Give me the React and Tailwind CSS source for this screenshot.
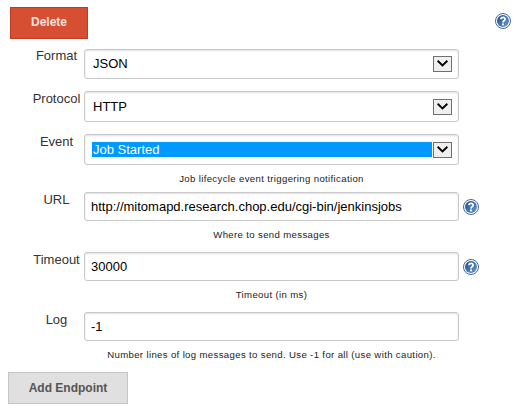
import React from 'react';

function HelpIcon() {
  return (
    <svg width="16" height="16" viewBox="0 0 16 16" className="block shrink-0">
      <defs>
        <linearGradient id="help" x1="0" y1="0" x2="1" y2="1">
          <stop offset="0" stopColor="#17498c" />
          <stop offset="1" stopColor="#6f9fce" />
        </linearGradient>
      </defs>
      <circle cx="8" cy="8" r="7.5" fill="#fff" stroke="#3f6a9f" strokeWidth="1" />
      <circle cx="8" cy="8" r="6" fill="url(#help)" />
      <path d="M6 6.2C6 3.7 10.1 3.7 10.1 6C10.1 7.6 8 7.6 8 9.5" fill="none" stroke="#fff" strokeWidth="1.8" />
      <rect x="7" y="10.5" width="2" height="1.8" fill="#fff" />
    </svg>
  );
}

function Arrow() {
  return (
    <span className="flex h-4 w-[19px] shrink-0 items-center justify-center border border-[#707070] bg-[#efefef]">
      <svg width="11" height="7" viewBox="0 0 11 7" className="mb-px block">
        <path d="M0.6 0.8L5.5 5.5L10.4 0.8" fill="none" stroke="#000" strokeWidth="1.9" />
      </svg>
    </span>
  );
}

const box = 'flex w-[375px] shrink-0 items-center rounded-[3px] border border-[#c8c8c8] bg-white shadow-[inset_0_1px_2px_rgba(0,0,0,0.12)]';

function Row({ label, height, help, hint, labelTop = 'mt-px', children }) {
  return (
    <div className={`flex items-start ${height}`}>
      <div className={`ml-[29px] w-[55px] shrink-0 text-center text-[13px] leading-[14px] whitespace-nowrap text-[#333] ${labelTop}`}>{label}</div>
      <div className="w-[375px] shrink-0">
        {children}
        {hint && <div className="mt-2 text-center text-[9.6px] leading-3 tracking-[0.35px] whitespace-nowrap text-[#222]">{hint}</div>}
      </div>
      {help && <div className="ml-1 mt-[7px]"><HelpIcon /></div>}
    </div>
  );
}

function Select({ value, height, selected, nudge = '' }) {
  return (
    <div className={`${box} ${height} pl-[7px] pr-[6px] ${nudge}`}>
      <span className={`mr-px flex h-[15px] flex-1 items-center pl-px text-[13px] leading-[15px] ${selected ? 'bg-[#0099ff] text-white' : 'text-black'}`}>{value}</span>
      <Arrow />
    </div>
  );
}

function Input({ value }) {
  return (
    <div className={`${box} h-[29px] pl-[6px] text-[13px] leading-[15px] text-black`}>
      <span>{value}</span>
    </div>
  );
}

export default function App() {
  return (
    <div className="h-[414px] w-[518px] overflow-hidden bg-white font-['Liberation_Sans',Arial,sans-serif]">
      <div className="flex h-[49px] items-start justify-between pl-[10px] pr-[7px] pt-[7px]">
        <button className="h-8 w-[78px] border border-[#c03c20] bg-[#d64f33] pb-[2px] text-[12px] font-bold leading-[14px] text-[#f7e3df]">Delete</button>
        <div className="mt-[6px]"><HelpIcon /></div>
      </div>
      <Row label="Format" height="h-[42px]" labelTop="mt-0"><Select value="JSON" height="h-[30px]" nudge="pb-px" /></Row>
      <Row label="Protocol" height="h-[43px]"><Select value="HTTP" height="h-[31px]" /></Row>
      <Row label="Event" height="h-[58px]" hint="Job lifecycle event triggering notification"><Select value="Job Started" height="h-[31px]" selected /></Row>
      <Row label="URL" height="h-[60px]" hint="Where to send messages" help><Input value="http://mitomapd.research.chop.edu/cgi-bin/jenkinsjobs" /></Row>
      <Row label="Timeout" height="h-[60px]" hint="Timeout (in ms)" help><Input value="30000" /></Row>
      <Row label="Log" height="h-[60px]" hint="Number lines of log messages to send. Use -1 for all (use with caution)."><Input value="-1" /></Row>
      <button className="ml-2 block h-8 w-[120px] border border-[#c6c6c6] bg-[#e0e0e0] text-[12px] font-bold leading-[14px] text-[#555]">Add Endpoint</button>
    </div>
  );
}
